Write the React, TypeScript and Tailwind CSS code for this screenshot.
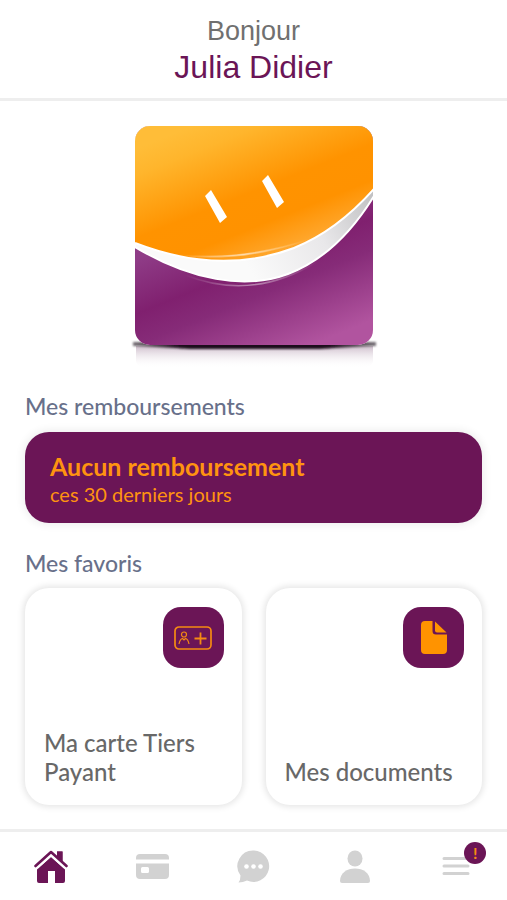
import type { ReactNode } from "react";

function SmileLogo() {
  return (
    <svg viewBox="119 116 270 254" className="block h-[254px] w-[270px]" role="img" aria-label="Logo">
      <defs>
        <linearGradient id="orange" gradientUnits="userSpaceOnUse" x1="170" y1="135" x2="232" y2="290">
          <stop offset="0" stopColor="#ffbd38" />
          <stop offset="0.15" stopColor="#ffb52c" />
          <stop offset="0.5" stopColor="#ff9300" />
          <stop offset="0.7" stopColor="#ff9200" />
          <stop offset="1" stopColor="#ffb347" />
        </linearGradient>
        <linearGradient id="purple" gradientUnits="userSpaceOnUse" x1="195" y1="235" x2="250" y2="370">
          <stop offset="0" stopColor="#8f3c87" />
          <stop offset="0.35" stopColor="#80206f" />
          <stop offset="0.55" stopColor="#862b78" />
          <stop offset="1" stopColor="#b1549f" />
        </linearGradient>
        <linearGradient id="teeth" gradientUnits="userSpaceOnUse" x1="250" y1="270" x2="373" y2="200">
          <stop offset="0" stopColor="#fafafa" />
          <stop offset="0.55" stopColor="#e9e8ea" />
          <stop offset="1" stopColor="#c2c2c4" />
        </linearGradient>
        <linearGradient id="reflection" x1="0" y1="0" x2="0" y2="1">
          <stop offset="0" stopColor="#b49ab0" stopOpacity="0.65" />
          <stop offset="1" stopColor="#ffffff" stopOpacity="0" />
        </linearGradient>
        <linearGradient id="shade" x1="0" y1="0" x2="1" y2="0">
          <stop offset="0" stopColor="#777177" />
          <stop offset="0.2" stopColor="#1b0a1a" />
          <stop offset="0.8" stopColor="#1b0a1a" />
          <stop offset="1" stopColor="#777177" />
        </linearGradient>
        <linearGradient id="glint" x1="0" y1="0" x2="1" y2="0">
          <stop offset="0" stopColor="#fff" stopOpacity="0" />
          <stop offset="0.5" stopColor="#fff" stopOpacity="0.45" />
          <stop offset="1" stopColor="#fff" stopOpacity="0" />
        </linearGradient>
        <filter id="soft" x="-5%" y="-100%" width="110%" height="300%">
          <feGaussianBlur stdDeviation="0.8" />
        </filter>
        <clipPath id="tile">
          <rect x="135" y="126" width="238" height="219" rx="15" />
        </clipPath>
      </defs>
      <path d="M136 346 H373 V360 Q373 368 360 368 H149 Q136 368 136 360Z" fill="url(#reflection)" />
      <path d="M133 342 H376 V346 Q350 347 320 349 H190 Q158 347 133 346Z" fill="url(#shade)" filter="url(#soft)" />
      <rect x="135" y="126" width="238" height="219" rx="15" fill="#fff" />
      <g clipPath="url(#tile)">
        <rect x="135" y="126" width="238" height="219" fill="url(#purple)" />
        <path
          d="M135 247 C190 280 245 290 288 274 C325 260 352 232 374 196 V120 H135Z"
          fill="url(#teeth)"
          stroke="#fff"
          strokeWidth="2"
        />
        <path
          d="M135 243 C194 266 246 266 294 248 C324 236 350 216 374 189 V120 H135Z"
          fill="url(#orange)"
        />
        <path d="M135 243 C194 266 246 266 294 248 C324 236 350 216 374 189" fill="none" stroke="#fff" strokeWidth="2" />
        <path d="M178 255 Q241 263 310 239 Q245 261 178 255Z" fill="url(#glint)" stroke="url(#glint)" strokeWidth="1.5" />
        <path d="M185 275 Q253 302 318 261" fill="none" stroke="url(#glint)" strokeWidth="1.5" />
      </g>
      <path d="M205 196 L211 190 L227 217 L220 223Z M262 181 L268 175 L284 202 L277 208Z" fill="#fff" />
    </svg>
  );
}

function FavoriteCard({ label, icon }: { label: string; icon: ReactNode }) {
  return (
    <button
      type="button"
      className="flex aspect-square flex-col justify-between rounded-3xl bg-white py-[19px] pr-[18px] pl-[19px] text-left shadow-[0_0_6px_2px_rgba(0,0,0,0.10)]"
    >
      <span className="flex size-[61px] items-center justify-center self-end rounded-[18px] bg-[#6b1556]">{icon}</span>
      <span className="text-2xl leading-[29px] font-medium text-[#686868]">{label}</span>
    </button>
  );
}

function NavItem({ label, active, children }: { label: string; active?: boolean; children: ReactNode }) {
  return (
    <a
      href="#"
      aria-label={label}
      className={"flex items-center justify-center " + (active ? "text-[#6b1556]" : "text-[#d2d2d2]")}
    >
      {children}
    </a>
  );
}

export default function App() {
  return (
    <div className="flex min-h-screen flex-col bg-white font-['Lato','Open_Sans',sans-serif]">
      <header className="border-b-[3px] border-[#eeeeee] pt-[13px] pb-[13px] text-center font-['Liberation_Sans',Arial,sans-serif]">
        <p className="text-[27px] leading-9 text-[#707070]">Bonjour</p>
        <h1 className="text-[32px] leading-9 text-[#6b1556]">Julia Didier</h1>
      </header>

      <main className="flex-1 px-[25px] pt-[15px]">
        <div className="flex justify-center">
          <SmileLogo />
        </div>

        <h2 className="mt-5 text-[23px] leading-8 font-medium text-[#68708a]">Mes remboursements</h2>
        <section className="mt-[10px] rounded-3xl bg-[#6b1556] px-[25px] pt-5 pb-4 text-[#ff9310] shadow-[0_0_8px_2px_rgba(0,0,0,0.07)]">
          <p className="text-[25px] leading-[29px] font-bold">Aucun remboursement</p>
          <p className="text-xl leading-[26px]">ces 30 derniers jours</p>
        </section>

        <h2 className="mt-6 text-[23px] leading-8 font-medium text-[#68708a]">Mes favoris</h2>
        <div className="mt-[9px] grid grid-cols-2 gap-6">
          <FavoriteCard
            label="Ma carte Tiers Payant"
            icon={
              <svg viewBox="0 0 38 24" className="h-6 w-[38px]" fill="none" stroke="#f58a12" aria-hidden="true">
                <rect x="1" y="1" width="36" height="22" rx="4" strokeWidth="1.7" />
                <circle cx="10" cy="8.5" r="2.5" strokeWidth="1.2" />
                <path d="M5 18 Q6 13 8.5 12.5 L10 14 L11.5 12.5 Q14 13 15 18" strokeWidth="1.2" />
                <path d="M26.5 6.5 V18.5 M20.5 12.5 H32.5" strokeWidth="1.8" />
              </svg>
            }
          />
          <FavoriteCard
            label="Mes documents"
            icon={
              <svg viewBox="0 0 26 33" className="h-[33px] w-[26px]" fill="#ff9300" aria-hidden="true">
                <path d="M4 0 H11.5 V10 Q11.5 13.5 15 13.5 H26 V29 Q26 33 22 33 H4 Q0 33 0 29 V4 Q0 0 4 0Z" />
                <path d="M14 0.5 L25.5 11.5 H16 Q14 11.5 14 9.5Z" />
              </svg>
            }
          />
        </div>
      </main>

      <nav aria-label="Navigation principale" className="mt-6 grid h-[71px] grid-cols-5 border-t-[3px] border-[#eeeeee]">
        <NavItem label="Accueil" active>
          <svg viewBox="0 0 34 33" className="h-[33px] w-[34px]" fill="currentColor" aria-hidden="true">
            <path d="M23 1.5 H28.5 V13 L23 8Z" />
            <path d="M17 7 L31 19.5 V31 Q31 33 29 33 H21 V21 H14 V33 H5 Q3 33 3 31 V19.5Z" />
            <path d="M3 17 L17 4.500 L31 17" fill="none" stroke="#fff" strokeWidth="3.5" />
            <path d="M3 14 V19 M31 14 V19" stroke="currentColor" strokeWidth="0" />
            <path d="M23 1.5 H28.5 V11 L23 6.5Z" />
            <path d="M1.5 16 L17 2 L32.5 16" fill="none" stroke="currentColor" strokeWidth="2.6" strokeLinecap="round" strokeLinejoin="round" />
          </svg>
        </NavItem>
        <NavItem label="Carte">
          <svg viewBox="0 0 33 27" className="h-[27px] w-[33px]" fill="currentColor" aria-hidden="true">
            <path d="M0 6.5 V5 Q0 1 4 1 H29 Q33 1 33 5 V6.5Z" />
            <path fillRule="evenodd" d="M0 10.5 H33 V22 Q33 26 29 26 H4 Q0 26 0 22Z M6.5 14 Q5 14 5 15.5 V18.5 Q5 20 6.5 20 H11.5 Q13 20 13 18.5 V15.5 Q13 14 11.5 14Z" />
          </svg>
        </NavItem>
        <NavItem label="Messages">
          <svg viewBox="0 0 33 33" className="size-[33px]" fill="currentColor" aria-hidden="true">
            <path d="M17 0.5 A15.7 15.7 0 1 1 10 30.5 Q6 32.5 1.5 32.5 Q3.5 30 3.5 25.5 A15.7 15.7 0 0 1 17 0.5Z" />
            <g fill="#fff">
              <circle cx="9.5" cy="16.5" r="2.3" />
              <circle cx="16.5" cy="16.5" r="2.3" />
              <circle cx="23.5" cy="16.5" r="2.3" />
            </g>
          </svg>
        </NavItem>
        <NavItem label="Profil">
          <svg viewBox="0 0 30 33" className="h-[33px] w-[30px]" fill="currentColor" aria-hidden="true">
            <ellipse cx="15" cy="8.5" rx="7.5" ry="8" />
            <path d="M0 31 C0 23 7 18.5 15 18.5 C23 18.5 30 23 30 31 Q30 33 28 33 H2 Q0 33 0 31Z" />
          </svg>
        </NavItem>
        <NavItem label="Menu">
          <span className="relative">
            <svg viewBox="0 0 28 20" className="h-5 w-7" stroke="currentColor" strokeWidth="3" strokeLinecap="round" aria-hidden="true">
              <path d="M2 2.5 H26 M2 10 H26 M2 17.5 H26" />
            </svg>
            <span className="absolute -top-[14px] -right-4 flex size-[22px] items-center justify-center rounded-full bg-[#6b1556] text-base font-bold text-[#f58a12]">
              !
            </span>
          </span>
        </NavItem>
      </nav>
    </div>
  );
}
